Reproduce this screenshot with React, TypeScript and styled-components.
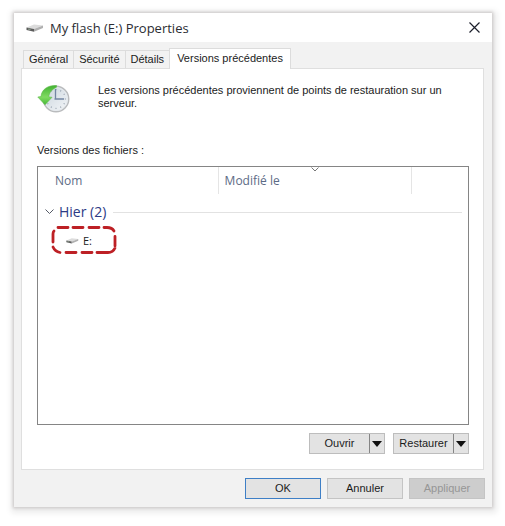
import React from "react";
import styled, { createGlobalStyle, css } from "styled-components";

const UI_FONT = '"Liberation Sans", Arial, sans-serif';
const SEGOE_FONT = '"Open Sans", "Noto Sans", sans-serif';

const GlobalStyle = createGlobalStyle`
  * { box-sizing: border-box; }
  body { margin: 0; background: #fff; font: 11px/13px ${UI_FONT}; color: #1b1b1b; }
  button { font: inherit; color: inherit; margin: 0; padding: 0; cursor: default; }
`;

const Page = styled.div`
  min-height: 100vh;
  display: flex;
  padding: 13px 13px 19px 14px;
`;

const Dialog = styled.section`
  flex: 1;
  min-width: 0;
  display: flex;
  flex-direction: column;
  background: #f2f2f2;
  box-shadow: 0 0 3px 1px #c9c5c5, 1px 2px 6px 4px #ececec;
`;

const TitleBar = styled.header`
  display: flex;
  align-items: center;
  height: 29px;
  padding: 0 10px 0 12px;
  gap: 6px;
  background: #fff;
`;

const Title = styled.h1`
  flex: 1;
  margin: 0;
  font: 500 13px/18px ${SEGOE_FONT};
  color: #2b2d33;
`;

const CloseButton = styled.button`
  display: flex;
  align-items: center;
  justify-content: center;
  width: 15px;
  height: 20px;
  border: 0;
  background: none;
`;

const Content = styled.div`
  flex: 1;
  display: flex;
  flex-direction: column;
  padding: 6px 8px 8px 7px;
`;

const TabList = styled.div`
  display: flex;
  align-items: flex-end;
  height: 20px;
  padding-left: 2px;
`;

const Tab = styled.button<{ $active?: boolean }>`
  height: 18px;
  padding: 0 5px;
  border: 1px solid #dcdcdc;
  border-right-width: 0;
  border-bottom: 0;
  background: #f2f2f2;
  white-space: nowrap;
  ${({ $active }) =>
    $active &&
    css`
      height: 21px;
      margin-bottom: -1px;
      padding: 0 7px 2px;
      border-right-width: 1px;
      background: #fff;
      z-index: 1;
    `}
`;

const Panel = styled.div`
  flex: 1;
  display: flex;
  flex-direction: column;
  padding: 15px 14px 15px 15px;
  border: 1px solid #dfdfdf;
  background: #fff;
`;

const Intro = styled.div`
  display: flex;
  align-items: flex-start;
  gap: 28px;
  min-height: 60px;
`;

const IntroText = styled.p`
  flex: 1;
  margin: 0;
`;

const ListLabel = styled.h2`
  margin: 0 0 9px;
  font: inherit;
`;

const FileList = styled.div`
  flex: 1;
  border: 1px solid #858585;
  font-family: ${SEGOE_FONT};
`;

const ListHeader = styled.div`
  display: grid;
  grid-template-columns: 42fr 45fr 13fr;
  height: 26px;
  color: #5c6b85;
  font-size: 12px;
  line-height: 27px;
`;

const HeaderCell = styled.div<{ $first?: boolean }>`
  position: relative;
  padding-left: ${({ $first }) => ($first ? 17 : 6)}px;
  border-right: 1px solid #e5e5e5;
  &:last-child { border-right: 0; }
`;

const SortMark = styled.svg`
  position: absolute;
  top: 0;
  left: 50%;
  margin-left: -4px;
`;

const GroupRow = styled.button`
  display: flex;
  align-items: center;
  width: 100%;
  margin-top: 9px;
  padding: 0 6px 0 7px;
  gap: 5px;
  border: 0;
  background: none;
  && {
    color: #2c3a85;
    font: 14px/20px ${SEGOE_FONT};
  }
`;

const Rule = styled.span`
  flex: 1;
  height: 1px;
  margin-left: 2px;
  background: #e2e2e2;
`;

const FileItem = styled.div`
  position: relative;
  display: inline-flex;
  align-items: center;
  width: 66px;
  height: 30px;
  margin: 3px 0 0 13px;
  padding-left: 15px;
  gap: 4px;
  font-size: 11px;
  color: #222;
`;

const Highlight = styled.svg`
  position: absolute;
  inset: 0;
  pointer-events: none;
`;

const Actions = styled.div`
  display: flex;
  justify-content: flex-end;
  gap: 8px;
  padding-top: 8px;
`;

const SplitButton = styled.div`
  display: flex;
  width: 76px;
  height: 21px;
  border: 1px solid #bdbdbd;
  background: #e3e3e3;
`;

const SplitPart = styled.button<{ $arrow?: boolean }>`
  flex: ${({ $arrow }) => ($arrow ? "0 0 15px" : "1")};
  display: flex;
  align-items: center;
  justify-content: center;
  border: 0;
  border-left: ${({ $arrow }) => ($arrow ? "1px solid #858585" : "0")};
  background: none;
`;

const Footer = styled.footer`
  display: flex;
  justify-content: flex-end;
  gap: 6px;
  padding-top: 8px;
  margin-right: -1px;
`;

const PushButton = styled.button<{ $primary?: boolean }>`
  width: 76px;
  height: 21px;
  border: 1px solid ${({ $primary }) => ($primary ? "#3e7fc6" : "#c4c4c4")};
  background: #e3e3e3;
  &:disabled {
    background: #cdcdcd;
    color: #969696;
  }
`;

function DriveIcon({ width }: { width: number }) {
  return (
    <svg width={width} height={Math.round(width / 2)} viewBox="0 0 18 9" aria-hidden="true">
      <path d="M0.500 4.500 8 1.500 17 2.400 8 6z" fill="#dcdcdc" />
      <path d="M0.500 4.500 8 6V8.700L0.500 7z" fill="#5c5c5c" />
      <path d="M8 6 17 2.400V5L8 8.700z" fill="#b0b0b0" />
      <path d="M2 5.500 4.500 6v1L2 6.500z" fill="#93a593" />
    </svg>
  );
}

function HistoryIcon() {
  const ticks = Array.from({ length: 12 }, (_, i) => i * 30);
  return (
    <svg width="33" height="30" viewBox="0 0 33 30" aria-hidden="true">
      <defs>
        <linearGradient id="face" x1="0" y1="0" x2="1" y2="1">
          <stop offset="0" stopColor="#c8d3dc" />
          <stop offset="1" stopColor="#f5f7f9" />
        </linearGradient>
        <linearGradient id="arrow" x1="0" y1="0" x2="0" y2="1">
          <stop offset="0" stopColor="#43b233" />
          <stop offset="0.6" stopColor="#7fda61" />
          <stop offset="1" stopColor="#45b935" />
        </linearGradient>
      </defs>
      <circle cx="19" cy="15" r="12.700" fill="url(#face)" stroke="#b9bbbd" strokeWidth="1.500" />
      <circle cx="19" cy="15" r="11.500" fill="none" stroke="#e6eaee" />
      {ticks.map((angle) => (
        <path key={angle} d="M19 5v1.200" stroke="#9aa4b1" transform={`rotate(${angle} 19 15)`} />
      ))}
      <path d="M18.500 5v10.500M17.500 15h9.500" stroke="#7385a3" strokeWidth="1.300" fill="none" />
      <path
        d="M19.500 1.500C11 1 4.500 5.500 4 12.500L0.800 13 8 20.800 15 13.300 11.800 13C12 9 14.500 5.500 19.500 3.200z"
        fill="url(#arrow)"
        stroke="#5cbb49"
        strokeWidth="0.600"
      />
    </svg>
  );
}

function ArrowDown() {
  return (
    <svg width="10" height="6" viewBox="0 0 10 6" aria-hidden="true">
      <path d="M0 0h10L5 6z" fill="#111" />
    </svg>
  );
}

const tabs = ["Général", "Sécurité", "Détails", "Versions précédentes"];

export default function App() {
  return (
    <>
      <GlobalStyle />
      <Page>
        <Dialog role="dialog" aria-labelledby="dialog-title">
          <TitleBar>
            <DriveIcon width={18} />
            <Title id="dialog-title">My flash (E:) Properties</Title>
            <CloseButton aria-label="Fermer">
              <svg width="11" height="11" viewBox="0 0 11 11" aria-hidden="true">
                <path d="M0.500 0.500l10 10M10.500 0.500l-10 10" stroke="#1c1f2b" strokeWidth="1.200" />
              </svg>
            </CloseButton>
          </TitleBar>
          <Content>
            <TabList role="tablist">
              {tabs.map((name, i) => (
                <Tab key={name} role="tab" aria-selected={i === 3} $active={i === 3}>
                  {name}
                </Tab>
              ))}
            </TabList>
            <Panel role="tabpanel">
              <Intro>
                <HistoryIcon />
                <IntroText>
                  Les versions précédentes proviennent de points de restauration sur un serveur.
                </IntroText>
              </Intro>
              <ListLabel id="list-label">Versions des fichiers :</ListLabel>
              <FileList aria-labelledby="list-label" role="group">
                <ListHeader>
                  <HeaderCell $first>Nom</HeaderCell>
                  <HeaderCell>
                    Modifié le
                    <SortMark width="8" height="5" viewBox="0 0 8 5" aria-hidden="true">
                      <path d="M0.500 0.500 4 4 7.500 0.500" fill="none" stroke="#777" />
                    </SortMark>
                  </HeaderCell>
                  <HeaderCell />
                </ListHeader>
                <GroupRow aria-expanded="true">
                  <svg width="9" height="6" viewBox="0 0 9 6" aria-hidden="true">
                    <path d="M0.500 0.500 4.500 4.500 8.500 0.500" fill="none" stroke="#555a66" />
                  </svg>
                  Hier (2)
                  <Rule />
                </GroupRow>
                <FileItem>
                  <DriveIcon width={13} />
                  E:
                  <Highlight width="66" height="30" viewBox="0 0 66 30" aria-hidden="true">
                    <path
                      d="M7 2.500H17M22 2.500H32M38 2.500H48M53 2.500H56Q61 2.500 63 6M64 11.500V21M64 23Q62 27.500 57 27.500H46M41 27.500H31M25 27.500H15M9 27.500Q4 26.500 2 22M2 17V9Q2 7 3 6"
                      fill="none"
                      stroke="#bd2025"
                      strokeWidth="2.800"
                      strokeLinecap="round"
                    />
                  </Highlight>
                </FileItem>
              </FileList>
              <Actions>
                <SplitButton>
                  <SplitPart>Ouvrir</SplitPart>
                  <SplitPart $arrow aria-label="Options d'ouverture"><ArrowDown /></SplitPart>
                </SplitButton>
                <SplitButton>
                  <SplitPart>Restaurer</SplitPart>
                  <SplitPart $arrow aria-label="Options de restauration"><ArrowDown /></SplitPart>
                </SplitButton>
              </Actions>
            </Panel>
            <Footer>
              <PushButton $primary>OK</PushButton>
              <PushButton>Annuler</PushButton>
              <PushButton disabled>Appliquer</PushButton>
            </Footer>
          </Content>
        </Dialog>
      </Page>
    </>
  );
}
